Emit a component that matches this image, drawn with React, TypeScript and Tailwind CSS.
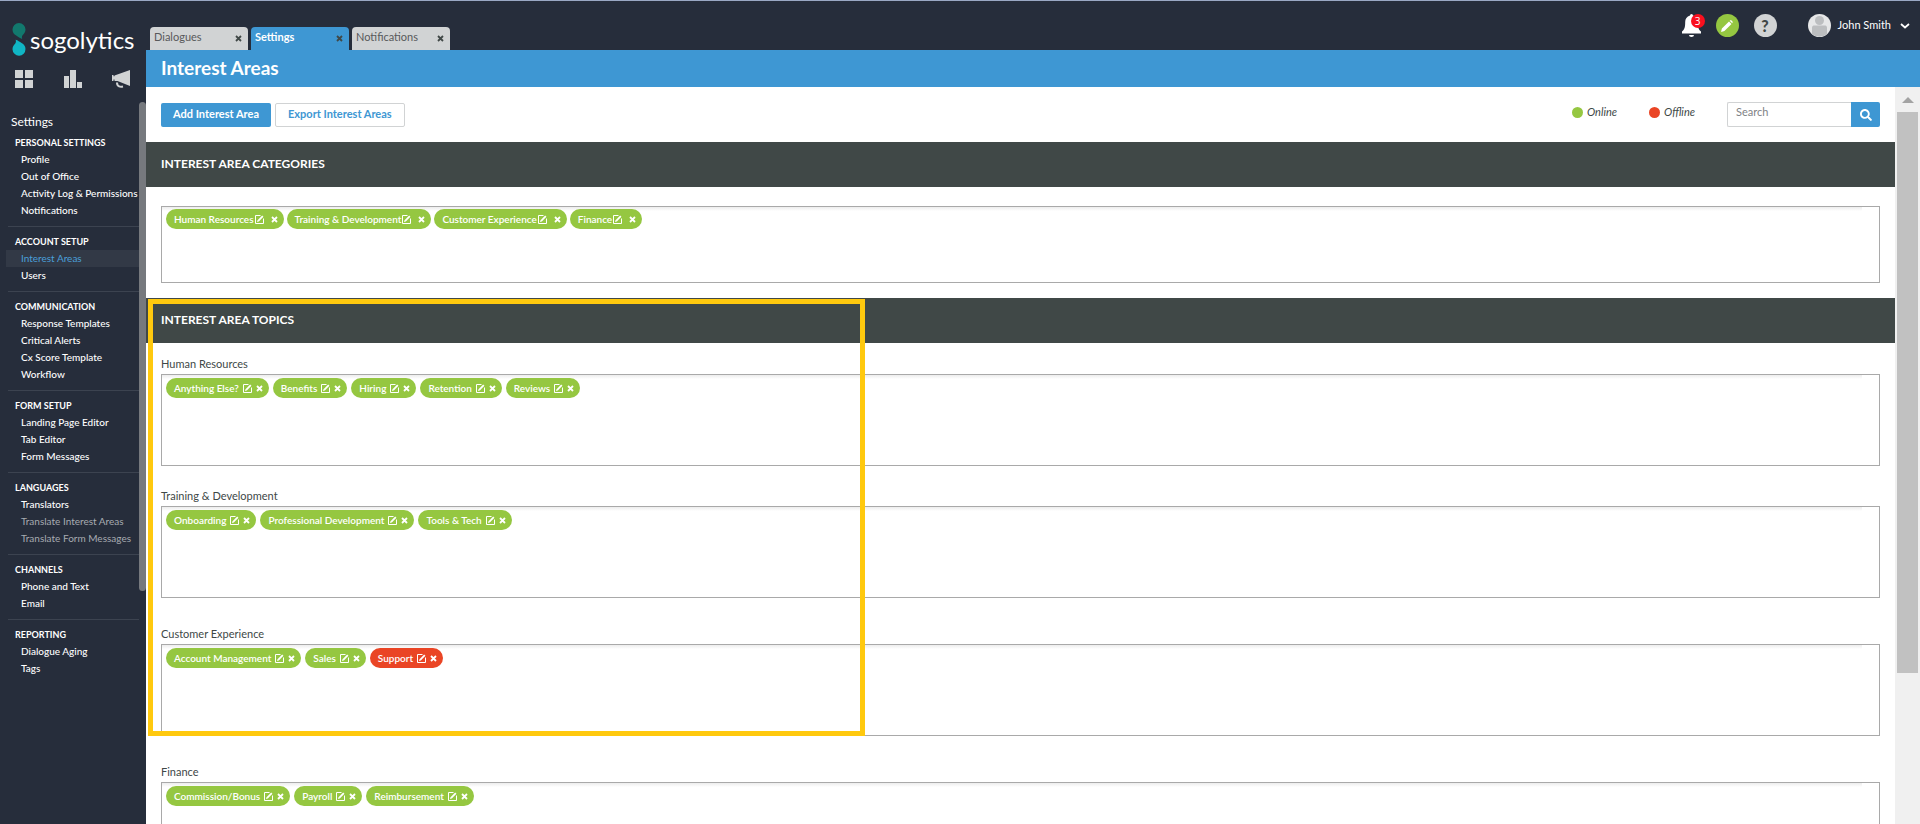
import { FaSearch } from "react-icons/fa";

type Topic = { name: string; offline?: boolean };

const tabs = [
  { title: "Dialogues" },
  { title: "Settings", active: true },
  { title: "Notifications" },
];

const menu = [
  {
    title: "PERSONAL SETTINGS",
    items: [
      { name: "Profile" },
      { name: "Out of Office" },
      { name: "Activity Log & Permissions" },
      { name: "Notifications" },
    ],
  },
  {
    title: "ACCOUNT SETUP",
    items: [{ name: "Interest Areas", active: true }, { name: "Users" }],
  },
  {
    title: "COMMUNICATION",
    items: [
      { name: "Response Templates" },
      { name: "Critical Alerts" },
      { name: "Cx Score Template" },
      { name: "Workflow" },
    ],
  },
  {
    title: "FORM SETUP",
    items: [
      { name: "Landing Page Editor" },
      { name: "Tab Editor" },
      { name: "Form Messages" },
    ],
  },
  {
    title: "LANGUAGES",
    items: [
      { name: "Translators" },
      { name: "Translate Interest Areas", muted: true },
      { name: "Translate Form Messages", muted: true },
    ],
  },
  {
    title: "CHANNELS",
    items: [{ name: "Phone and Text" }, { name: "Email" }],
  },
  {
    title: "REPORTING",
    items: [{ name: "Dialogue Aging" }, { name: "Tags" }],
  },
] as { title: string; items: { name: string; active?: boolean; muted?: boolean }[] }[];

const categories: Topic[] = [
  { name: "Human Resources" },
  { name: "Training & Development" },
  { name: "Customer Experience" },
  { name: "Finance" },
];

const topicGroups: { title: string; topics: Topic[] }[] = [
  {
    title: "Human Resources",
    topics: [
      { name: "Anything Else?" },
      { name: "Benefits" },
      { name: "Hiring" },
      { name: "Retention" },
      { name: "Reviews" },
    ],
  },
  {
    title: "Training & Development",
    topics: [
      { name: "Onboarding" },
      { name: "Professional Development" },
      { name: "Tools & Tech" },
    ],
  },
  {
    title: "Customer Experience",
    topics: [
      { name: "Account Management" },
      { name: "Sales" },
      { name: "Support", offline: true },
    ],
  },
  {
    title: "Finance",
    topics: [
      { name: "Commission/Bonus" },
      { name: "Payroll" },
      { name: "Reimbursement" },
    ],
  },
];

function CloseIcon({ className }: { className?: string }) {
  return (
    <svg viewBox="0 0 7 7" className={className} fill="none" stroke="currentColor" strokeWidth="1.8">
      <path d="M1 1l5 5M6 1L1 6" />
    </svg>
  );
}

function EditIcon() {
  return (
    <svg viewBox="0 0 9 9" className="h-[9px] w-[9px]" fill="none" stroke="currentColor">
      <path d="M5.500 .5h-5v8h8v-5" />
      <path d="M3.200 5.800L7.800 1.200" strokeWidth="1.800" />
      <path d="M2 7l.6-1.900 1.300 1.300z" fill="currentColor" stroke="none" />
    </svg>
  );
}

function Logo() {
  return (
    <a href="#" className="flex items-center gap-1 text-white">
      <svg viewBox="0 0 14 33" className="h-[33px] w-[14px] shrink-0">
        <path d="M7 0a6.500 6.500 0 0 1 6.500 6.500c0 2.600-1.500 4.200-2.700 5.500-1 1.100-1.100 2.200-.6 3.900-2.300-.6-4-2-6-3.300C2 11.300.5 9.600.5 6.600A6.500 6.500 0 0 1 7 0z" fill="#12786d" />
        <path d="M3.600 16.800c2.400.6 4 2 6 3.300 2.300 1.300 3.900 3.200 3.900 6A6.500 6.500 0 0 1 .5 26.300c0-2.600 1.400-4.300 2.600-5.600 1-1.200 1-2.700.5-3.900z" fill="#10b5c4" />
      </svg>
      <span className="text-[24px] leading-7">sogolytics</span>
    </a>
  );
}

function Pill({ topic, category }: { topic: Topic; category?: boolean }) {
  return (
    <li
      className={`flex h-5 items-center rounded-full pl-2 pr-[6px] text-[10px] font-semibold text-white ${
        topic.offline ? "bg-[#ea4525]" : "bg-[#95c741]"
      }`}
    >
      <span className={category ? "mr-px" : "mr-1"}>{topic.name}</span>
      <button type="button" aria-label={`Edit ${topic.name}`} className={category ? "mr-[7px]" : "mr-1"}>
        <EditIcon />
      </button>
      <button type="button" aria-label={`Remove ${topic.name}`}>
        <CloseIcon className="h-[7px] w-[7px]" />
      </button>
    </li>
  );
}

function PillBox({ topics, category }: { topics: Topic[]; category?: boolean }) {
  return (
    <div className={`border border-[#a9a9a9] ${category ? "h-[77px]" : "h-[92px]"}`}>
      <div className="mr-[17px] h-1 bg-linear-to-b from-[#ededed] to-white" />
      <ul className={`flex flex-wrap px-1 ${category ? "-mt-[2px] gap-[3px]" : "-mt-px gap-1"}`}>
        {topics.map((topic) => (
          <Pill key={topic.name} topic={topic} category={category} />
        ))}
      </ul>
    </div>
  );
}

function SectionTitle({ children }: { children: string }) {
  return (
    <h2 className="flex h-[45px] items-center bg-[#404847] px-[15px] pb-[2px] text-[12px] font-bold text-white">
      {children}
    </h2>
  );
}

function Sidebar() {
  return (
    <aside className="relative flex w-[146px] shrink-0 flex-col bg-[#262d3b] text-white">
      <div className="px-3 pt-[22px]">
        <Logo />
      </div>

      {/* Module shortcuts */}
      <div className="mt-[14px] flex justify-between pl-[15px] pr-4 text-[#d1d3d4]">
        <a href="#" aria-label="Dashboard">
          <svg viewBox="0 0 18 18" className="h-[18px] w-[18px]" fill="currentColor">
            <path d="M0 0h8v8H0zM10 0h8v8h-8zM0 10h8v8H0zM10 10h8v8h-8z" />
          </svg>
        </a>
        <a href="#" aria-label="Reports">
          <svg viewBox="0 0 18 18" className="h-[18px] w-[18px]" fill="currentColor">
            <path d="M0 6h5v12H0zM6 0h6v18H6zM13 12h5v6h-5z" />
          </svg>
        </a>
        <a href="#" aria-label="Campaigns">
          <svg viewBox="0 0 18 18" className="h-[18px] w-[18px]" fill="currentColor">
            <path d="M18 0v16L5.500 11H2.500V9.500H1.500V11H0V5h1.500v1.200h1V5.500z" />
            <path d="M5 12.500c0 4.500 3.500 4.500 6 4" fill="none" stroke="currentColor" strokeWidth="2" />
          </svg>
        </a>
      </div>

      <div className="mt-[26px] pl-[11px] text-[12px] leading-4">Settings</div>

      <nav className="-mt-[2px]">
        {menu.map((group, i) => (
          <div key={group.title}>
            {i > 0 && <hr className="ml-2 mr-[7px] border-[#3c4350]" />}
            <div className="py-[7px] pl-[6px]">
              <h3 className="pl-[9px] text-[9px] font-bold leading-4">{group.title}</h3>
              <ul>
                {group.items.map((item) => (
                  <li key={item.name} className={item.active ? "bg-[#323946]" : ""}>
                    <a
                      href="#"
                      className={`block whitespace-nowrap pl-[15px] text-[10px] leading-[17px] ${
                        item.active ? "text-[#4a9fd9]" : item.muted ? "text-[#a7abb1]" : "font-medium"
                      }`}
                    >
                      {item.name}
                    </a>
                  </li>
                ))}
              </ul>
            </div>
          </div>
        ))}
      </nav>

      {/* Scroll thumb */}
      <div className="absolute right-0 top-[101px] h-[489px] w-[7px] rounded-full bg-[#76797e]" />
    </aside>
  );
}

function TopBar() {
  return (
    <header className="flex h-[49px] items-end justify-between bg-[#262d3b] pl-1 pr-[10px]">
      <nav className="flex gap-[3px]">
        {tabs.map((tab) => (
          <div
            key={tab.title}
            className={`flex h-[23px] w-[98px] items-center justify-between rounded-t pl-1 pr-[6px] text-[11px] ${
              tab.active ? "bg-[#3e97d3] font-bold text-white" : "bg-[#d1d3d4] text-[#58595b]"
            }`}
          >
            <a href="#" className="pb-[2px]">{tab.title}</a>
            <button type="button" aria-label={`Close ${tab.title}`} className="text-[#404847]">
              <CloseIcon className="h-[7px] w-[7px]" />
            </button>
          </div>
        ))}
      </nav>

      <div className="mb-[13px] flex items-center text-white">
        <button type="button" aria-label="Notifications" className="relative mr-[15px]">
          <svg viewBox="0 0 19 23" className="h-[23px] w-[19px]" fill="currentColor">
            <path d="M8 1.500a1.500 1.500 0 0 1 3 0c3.200.7 4.800 3.500 4.800 6.500 0 5.500.7 7.500 3.200 9.500v2H0v-2c2.500-2 3.200-4 3.200-9.500 0-3 1.600-5.800 4.800-6.500zM7 21h5a2.500 2 0 0 1-5 0z" />
          </svg>
          <span className="absolute -right-1 top-0 flex h-[14px] w-[14px] items-center justify-center rounded-full bg-[#fa0f1e] font-['Open_Sans',sans-serif] text-[10px]">
            3
          </span>
        </button>
        <button
          type="button"
          aria-label="Compose"
          className="mr-[15px] flex h-[23px] w-[23px] items-center justify-center rounded-full bg-[#95c741]"
        >
          <svg viewBox="0 0 12 12" className="h-3 w-3" fill="currentColor">
            <path d="M0 12L.9 8.600 8 1.500l2.500 2.500-7.100 7.100zM8.700.8c1.400-1.600 4 1 2.500 2.500z" />
          </svg>
        </button>
        <button
          type="button"
          aria-label="Help"
          className="mr-[31px] flex h-[23px] w-[23px] items-center justify-center rounded-full bg-[#d1d3d4] text-[16px] font-black leading-none text-[#404847]"
        >
          ?
        </button>
        <button type="button" className="flex items-center text-[11px]">
          <svg viewBox="0 0 23 23" className="mr-[7px] h-[23px] w-[23px]">
            <circle cx="11.500" cy="11.500" r="11.500" fill="#e6e7e8" />
            <circle cx="11.500" cy="6.500" r="4.500" fill="#bcbec0" />
            <path d="M4 20v-6c0-2 1-2.500 2.500-2.500h10c1.500 0 2.500.5 2.500 2.500v6a11.500 11.500 0 0 1-15 0z" fill="#bcbec0" />
          </svg>
          John Smith
          <svg viewBox="0 0 10 6" className="ml-[9px] h-[6px] w-[10px]" fill="none" stroke="currentColor" strokeWidth="1.800">
            <path d="M1 1l4 3.500L9 1" />
          </svg>
        </button>
      </div>
    </header>
  );
}

function Toolbar() {
  return (
    <div className="flex h-[55px] items-center justify-between px-[15px]">
      <div className="flex gap-1">
        <button type="button" className="h-6 rounded-xs bg-[#3e97d3] px-3 text-[11px] font-bold text-white">
          Add Interest Area
        </button>
        <button
          type="button"
          className="h-6 rounded-xs border border-[#d1d3d4] bg-white px-3 text-[11px] font-bold text-[#3e97d3]"
        >
          Export Interest Areas
        </button>
      </div>

      <div className="flex items-center">
        <div className="mb-1 flex gap-8 text-[11px] italic">
          <span className="flex items-center gap-1">
            <i className="h-[11px] w-[11px] rounded-full bg-[#95c741]" />
            Online
          </span>
          <span className="flex items-center gap-1">
            <i className="h-[11px] w-[11px] rounded-full bg-[#ea4525]" />
            Offline
          </span>
        </div>
        <form className="ml-8 flex h-[25px]" onSubmit={(e) => e.preventDefault()}>
          <input
            type="text"
            aria-label="Search"
            placeholder="Search"
            className="w-[124px] rounded-l-xs border border-r-0 border-[#d1d3d4] px-2 pb-1 text-[11px] outline-none placeholder:text-[#808285]"
          />
          <button
            type="submit"
            aria-label="Search"
            className="flex w-[29px] items-center justify-center rounded-r-xs bg-[#3e97d3] text-white"
          >
            <FaSearch className="h-3 w-3" />
          </button>
        </form>
      </div>
    </div>
  );
}

export default function App() {
  return (
    <div className="flex h-screen overflow-hidden border-t border-[#9aa8c4] bg-[#262d3b] font-[Lato,'Liberation_Sans',sans-serif] text-[#404847]">
      <Sidebar />
      <main className="flex min-w-0 flex-1 flex-col bg-white">
        <TopBar />
        <h1 className="h-[37px] shrink-0 bg-[#3e97d3] px-[15px] text-[19px] font-bold leading-9 text-white">
          Interest Areas
        </h1>

        <div className="flex min-h-0 flex-1">
          <div className="min-w-0 flex-1 overflow-hidden">
            <Toolbar />

            <section>
              <SectionTitle>INTEREST AREA CATEGORIES</SectionTitle>
              <div className="px-[15px] pb-[15px] pt-[19px]">
                <PillBox topics={categories} category />
              </div>
            </section>

            <section className="relative">
              <SectionTitle>INTEREST AREA TOPICS</SectionTitle>
              <div className="px-[15px] pt-[11px]">
                {topicGroups.map((group) => (
                  <div key={group.title} className="mb-[26px] first:mb-5">
                    <h3 className="text-[11px] leading-5">{group.title}</h3>
                    <PillBox topics={group.topics} />
                  </div>
                ))}
              </div>
              {/* Highlight frame */}
              <div className="pointer-events-none absolute left-[2px] top-px h-[437px] w-[717px] border-5 border-[#ffc90e]" />
            </section>
          </div>

          {/* Page scrollbar */}
          <div className="flex w-[25px] shrink-0 flex-col items-center bg-[#f0f0f0] pt-[10px]">
            <svg viewBox="0 0 12 6" className="h-[6px] w-3" fill="#a3a3a3">
              <path d="M6 0l6 6H0z" />
            </svg>
            <div className="mt-[9px] h-[561px] w-[21px] bg-[#c1c1c1]" />
          </div>
        </div>
      </main>
    </div>
  );
}
